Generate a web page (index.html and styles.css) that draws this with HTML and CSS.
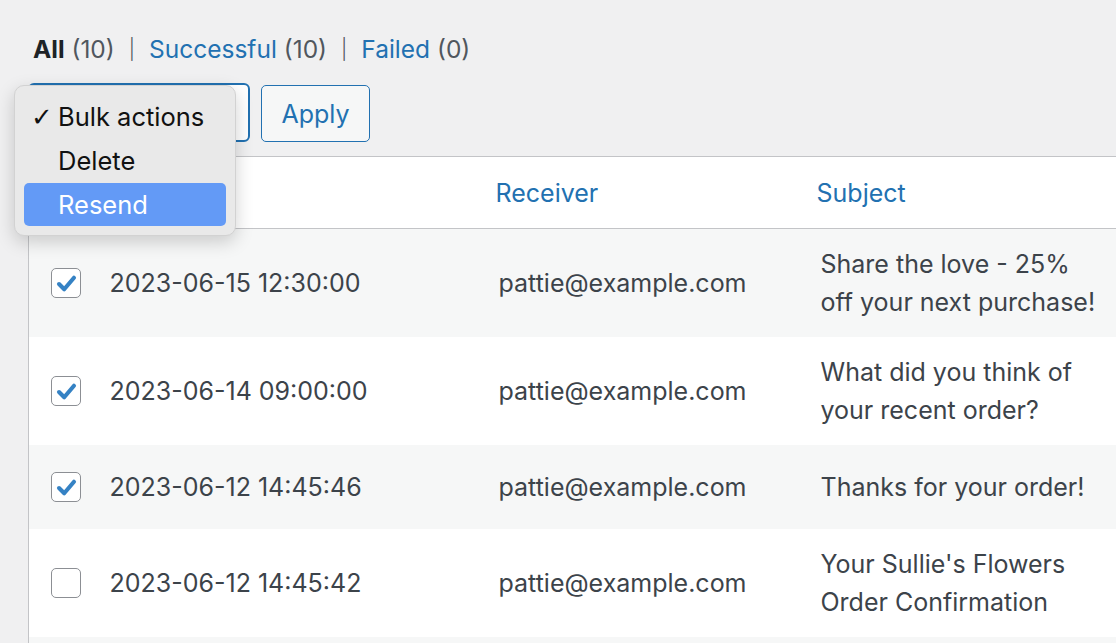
FILE: index.html
```html
<!DOCTYPE html>
<html lang="en">
<head>
<meta charset="utf-8">
<link rel="stylesheet" href="styles.css">
</head>
<body>
<div class="wrap">
  <ul class="views">
    <li><span class="current">All</span> <span class="count">(10)</span></li>
    <li class="sep">|</li>
    <li><a class="link">Successful</a> <span class="count">(10)</span></li>
    <li class="sep">|</li>
    <li><a class="link">Failed</a> <span class="count">(0)</span></li>
  </ul>
  <div class="tablenav">
    <div class="bulk">
      <div class="select"></div>
      <div class="menu">
        <div class="item"><span class="tick">✓</span>Bulk actions</div>
        <div class="item">Delete</div>
        <div class="item active">Resend</div>
      </div>
    </div>
    <button class="apply">Apply</button>
  </div>
  <table class="list">
    <colgroup>
      <col class="c-cb">
      <col class="c-date">
      <col class="c-recv">
      <col class="c-subj">
    </colgroup>
    <thead>
      <tr>
        <th class="cb"></th>
        <th class="date"></th>
        <th class="recv"><a class="link">Receiver</a></th>
        <th class="subj"><a class="link">Subject</a></th>
      </tr>
    </thead>
    <tbody>
      <tr class="alt">
        <td class="cb"><span class="box checked"><svg viewBox="0 0 20 20"><path d="M3.5 10.5 L8 15 L16.5 5" fill="none" stroke="#3582c4" stroke-width="3.6" stroke-linecap="round" stroke-linejoin="round"/></svg></span></td>
        <td class="date">2023-06-15 12:30:00</td>
        <td class="recv">pattie@example.com</td>
        <td class="subj">Share the love - 25% off your next purchase!</td>
      </tr>
      <tr>
        <td class="cb"><span class="box checked"><svg viewBox="0 0 20 20"><path d="M3.5 10.5 L8 15 L16.5 5" fill="none" stroke="#3582c4" stroke-width="3.6" stroke-linecap="round" stroke-linejoin="round"/></svg></span></td>
        <td class="date">2023-06-14 09:00:00</td>
        <td class="recv">pattie@example.com</td>
        <td class="subj">What did you think of your recent order?</td>
      </tr>
      <tr class="alt">
        <td class="cb"><span class="box checked"><svg viewBox="0 0 20 20"><path d="M3.5 10.5 L8 15 L16.5 5" fill="none" stroke="#3582c4" stroke-width="3.6" stroke-linecap="round" stroke-linejoin="round"/></svg></span></td>
        <td class="date">2023-06-12 14:45:46</td>
        <td class="recv">pattie@example.com</td>
        <td class="subj">Thanks for your order!</td>
      </tr>
      <tr>
        <td class="cb"><span class="box"></span></td>
        <td class="date">2023-06-12 14:45:42</td>
        <td class="recv">pattie@example.com</td>
        <td class="subj">Your Sullie's Flowers Order Confirmation</td>
      </tr>
      <tr class="alt">
        <td class="cb"><span class="box"></span></td>
        <td class="date"></td>
        <td class="recv"></td>
        <td class="subj"></td>
      </tr>
    </tbody>
  </table>
</div>
</body>
</html>
```

FILE: styles.css
```css
html, body {
  margin: 0;
  padding: 0;
  background: #f0f0f1;
  overflow: hidden;
  height: 643px;
}
body {
  font-family: Inter, "Liberation Sans", sans-serif;
  font-size: 25px;
  color: #3c434a;
}
.wrap {
  padding: 34px 0 0 28px;
}
.views {
  list-style: none;
  margin: 0 0 0 5px;
  padding: 0;
  display: flex;
  gap: 14px;
  line-height: 30px;
  color: #50575e;
  font-size: 24.5px;
}
.views .current {
  font-weight: 700;
  color: #1d2327;
}
.views .sep {
  color: #50575e;
  font-size: 20px;
  font-weight: 300;
}
.link {
  color: #2271b1;
  text-decoration: none;
}
.tablenav {
  margin-top: 21px;
  display: flex;
  align-items: flex-start;
  gap: 11px;
  height: 57px;
}
.bulk {
  position: relative;
  width: 222px;
  height: 57px;
}
.select {
  box-sizing: border-box;
  width: 222px;
  height: 59px;
  border: 2px solid #2271b1;
  border-radius: 6px;
  background: #fff;
  margin-top: -2px;
}
.menu {
  position: absolute;
  left: -14px;
  top: 0;
  width: 222px;
  box-sizing: border-box;
  padding: 9px;
  background: #e9e9e9;
  border-radius: 10px;
  border: 1px solid #d2d2d2;
  box-shadow: 0 6px 18px rgba(0,0,0,0.18);
  color: #111;
  font-size: 25.5px;
}
.item {
  height: 44px;
  line-height: 44px;
  padding-left: 34px;
  position: relative;
  border-radius: 5px;
}
.item .tick {
  position: absolute;
  left: 7px;
  top: 0;
  font-size: 26px;
  font-family: "DejaVu Sans", sans-serif;
}
.item.active {
  background: #639af6;
  color: #fff;
  height: 43px;
}
.apply {
  box-sizing: border-box;
  width: 109px;
  height: 57px;
  border: 1px solid #2271b1;
  border-radius: 5px;
  background: #f6f7f7;
  color: #2271b1;
  font-family: inherit;
  font-size: 25px;
  padding: 0;
}
.list {
  margin-top: 14px;
  width: 1140px;
  table-layout: fixed;
  border-collapse: collapse;
  border: 1px solid #c3c4c7;
  border-right: none;
  background: #fff;
}
.c-cb { width: 67px; }
.c-date { width: 389px; }
.c-recv { width: 322px; }
.c-subj { width: 362px; }
.list th {
  height: 72px;
  padding: 0 14px;
  text-align: left;
  font-weight: 400;
  border-bottom: 1px solid #c3c4c7;
  vertical-align: middle;
  box-sizing: border-box;
}
.list td {
  padding: 16px 14px;
  line-height: 38px;
  vertical-align: middle;
}
.list tr.alt td {
  background: #f6f7f7;
}
.list .cb {
  padding: 27px 0 27px 22px;
}
.list th.cb {
  padding: 0 0 0 22px;
}
.list th.recv {
  padding-left: 11px;
}
.list td.subj {
  padding-right: 68px;
}
.list th.subj {
  padding-left: 10px;
}
.box {
  display: block;
  box-sizing: border-box;
  width: 30px;
  height: 30px;
  border: 1.5px solid #8c8f94;
  border-radius: 5px;
  background: #fff;
}
.box svg {
  display: block;
  width: 23px;
  height: 23px;
  margin: 2.5px 0 0 2.5px;
}
```
